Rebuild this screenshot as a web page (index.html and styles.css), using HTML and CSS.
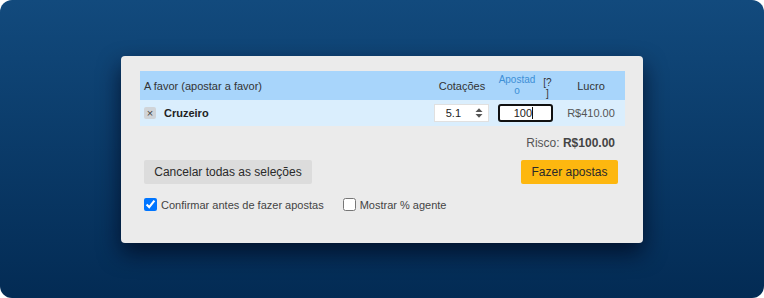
FILE: index.html
```html
<!DOCTYPE html>
<html lang="pt">
<head>
    <meta charset="UTF-8">
    <title>Boletim de apostas</title>
    <link rel="stylesheet" href="styles.css">
</head>
<body>
    <div class="frame">
        <section class="betslip">
            <div class="grid head">
                <div class="cell name">A favor (apostar a favor)</div>
                <div class="cell center">Cotações</div>
                <div class="cell stake-head">
                    <span class="wrap blue">Apostado</span>
                    <span class="wrap help">[?]</span>
                </div>
                <div class="cell center">Lucro</div>
            </div>
            <div class="grid row">
                <div class="cell name">
                    <span class="remove">&times;</span>
                    <strong>Cruzeiro</strong>
                </div>
                <div class="cell">
                    <div class="odds">
                        <span>5.1</span>
                        <svg width="8" height="12" viewBox="0 0 8 12">
                            <path d="M0.5 5 L4 1.2 L7.5 5 Z" fill="#555"/>
                            <path d="M0.5 7 L4 10.8 L7.5 7 Z" fill="#555"/>
                        </svg>
                    </div>
                </div>
                <div class="cell">
                    <div class="stake">100<span class="caret"></span></div>
                </div>
                <div class="cell center profit">R$410.00</div>
            </div>

            <p class="risk">Risco: <strong>R$100.00</strong></p>

            <div class="actions">
                <button class="btn cancel">Cancelar todas as seleções</button>
                <button class="btn place">Fazer apostas</button>
            </div>

            <div class="options">
                <label><input type="checkbox" checked> Confirmar antes de fazer apostas</label>
                <label><input type="checkbox"> Mostrar % agente</label>
            </div>
        </section>
    </div>
</body>
</html>
```

FILE: styles.css
```css
body {
    margin: 0;
    background: #fff;
    font-family: 'Liberation Sans', Arial, sans-serif;
    font-size: 11px;
    color: #333;
}

.frame {
    width: 764px;
    height: 298px;
    box-sizing: border-box;
    padding: 56px 121px 0;
    border-radius: 12px;
    background: linear-gradient(to bottom, #124a7d, #032b54);
}

.betslip {
    background-color: #ebebeb;
    border-radius: 4px;
    height: 187px;
    box-sizing: border-box;
    padding: 15px 18px 0 19px;
    box-shadow: 0 10px 22px rgba(0, 8, 30, 0.75);
}

.grid {
    display: grid;
    grid-template-columns: 1fr 64px 63px 68px;
}

.head {
    background-color: #a8d5fb;
    height: 29px;
}

.row {
    background-color: #daeefd;
    height: 26px;
}

.cell {
    display: flex;
    align-items: center;
    padding: 0 4px;
}

.center {
    justify-content: center;
}

.stake-head {
    gap: 7px;
    font-size: 10px;
    line-height: 11px;
}

.wrap {
    display: inline-block;
    word-break: break-all;
    line-break: anywhere;
    text-align: center;
}

.blue {
    width: 38px;
    color: #3d8fd6;
    margin-top: -2px;
}

.help {
    width: 9px;
    margin-top: 4px;
}

.remove {
    display: inline-flex;
    align-items: center;
    justify-content: center;
    width: 12px;
    height: 12px;
    background: #d0d4d8;
    border-radius: 2px;
    font-size: 11px;
    color: #444;
    margin-right: 8px;
}

.name strong {
    color: #222;
}

.odds {
    display: flex;
    align-items: center;
    justify-content: flex-end;
    gap: 14px;
    width: 55px;
    height: 18px;
    box-sizing: border-box;
    background: #fff;
    border: 1px solid #e0e0e0;
    padding-right: 5px;
    color: #222;
}

.stake {
    display: flex;
    align-items: center;
    justify-content: flex-end;
    width: 55px;
    height: 18px;
    box-sizing: border-box;
    background: #fff;
    border: 2px solid #111;
    border-radius: 3px;
    padding-right: 18px;
    color: #222;
}

.caret {
    display: inline-block;
    width: 1px;
    height: 12px;
    background: #111;
}

.profit {
    color: #555;
}

.risk {
    margin: 10px 10px 0 0;
    text-align: right;
    font-size: 12px;
    color: #555;
}

.risk strong {
    color: #444;
}

.actions {
    display: flex;
    justify-content: space-between;
    padding: 0 7px 0 4px;
    margin-top: 10px;
}

.btn {
    border: none;
    border-radius: 2px;
    height: 24px;
    font-family: inherit;
    font-size: 12px;
    color: #2a2a2a;
    padding: 0;
    white-space: nowrap;
}

.cancel {
    background-color: #dcdcdc;
    width: 168px;
}

.place {
    background-color: #fdb70f;
    width: 97px;
}

.options {
    display: flex;
    gap: 19px;
    padding-left: 4px;
    margin-top: 14px;
}

.options label {
    display: flex;
    align-items: center;
    gap: 4px;
    color: #444;
}

.options input {
    margin: 0;
    width: 13px;
    height: 13px;
}
```
